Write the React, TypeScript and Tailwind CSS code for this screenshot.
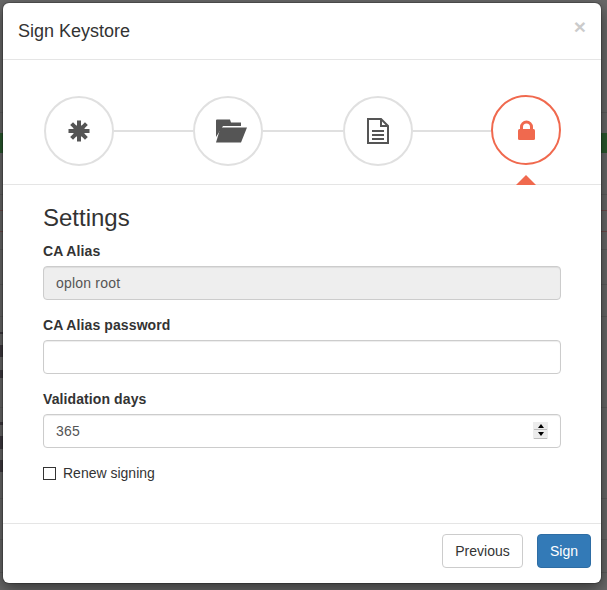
// rows of the page behind the backdrop, only their edges show beside the dialog
const filas = [
  { h: 'h-[112px]', cn: '' },
  { h: 'h-px', cn: 'bg-[#5e5e5e]' },
  { h: 'h-[20px]', cn: '' },
  { h: 'h-[20px]', cn: 'bg-[#2b5a2e]' },
  { h: 'h-[41px]', cn: '' },
  { h: 'h-px', cn: 'bg-[#5e5e5e]' },
  { h: 'h-[15px]', cn: '' },
  { h: 'h-px', cn: 'bg-[#6e4a4a]' },
  { h: 'h-[20px]', cn: '' },
  { h: 'h-px', cn: 'bg-[#6e4a4a]' },
  { h: 'h-[17px]', cn: '' },
  { h: 'h-px', cn: 'bg-[#5e5e5e]' },
  { h: 'h-[34px]', cn: '' },
  { h: 'h-px', cn: 'bg-[#5e5e5e]' },
  { h: 'h-[31px]', cn: '' },
  { h: 'h-px', cn: 'bg-[#5e5e5e]' },
  { h: 'h-[15px]', cn: '' },
  { h: 'h-[2px]', cn: '', marca: true },
  { h: 'h-[11px]', cn: '' },
  { h: 'h-[12px]', cn: '', marca: true },
  { h: 'h-[13px]', cn: '' },
  { h: 'h-[8px]', cn: '', marca: true },
  { h: 'h-[29px]', cn: '' },
  { h: 'h-px', cn: 'bg-[#5e5e5e]' },
  { h: 'h-[14px]', cn: '' },
  { h: 'h-[3px]', cn: '', marca: true },
  { h: 'h-[11px]', cn: '' },
  { h: 'h-[13px]', cn: '', marca: true },
  { h: 'h-[11px]', cn: '' },
  { h: 'h-[12px]', cn: '', marca: true },
  { h: 'h-[26px]', cn: '' },
  { h: 'h-px', cn: 'bg-[#5e5e5e]' },
  { h: 'h-[40px]', cn: '' },
  { h: 'h-px', cn: 'bg-[#5e5e5e]' },
  { h: 'h-[32px]', cn: '' },
  { h: 'h-px', cn: 'bg-[#5e5e5e]' },
];

function Asterisco() {
  return (
    <svg viewBox="0 0 22 22" className="h-[22px] w-[22px]" fill="none" stroke="#555555">
      <circle cx="11" cy="11" r="6" fill="#555555" stroke="none" />
      <path strokeWidth="4" d="M11 0.5V21.5M0.5 11H21.5M3.6 3.6L18.4 18.4M18.4 3.6L3.6 18.4" />
    </svg>
  );
}

function Carpeta() {
  return (
    <svg viewBox="0 0 32 24" className="ml-[5px] h-[24px] w-[32px]" fill="#555555">
      <path d="M1 1.5Q1 .5 2 .5H15L16 3.5H26V7H8L1 18Z" />
      <path d="M5.5 8.5H32L26 23.5H1Z" />
    </svg>
  );
}

function Archivo() {
  return (
    <svg viewBox="0 0 22 26" className="h-[26px] w-[22px]" fill="none" stroke="#555555" strokeWidth="2">
      <path d="M1 1H14L21 8V25H1Z" />
      <path d="M14 1V8H21" />
      <path d="M5 13H17M5 17H17M5 21H17" />
    </svg>
  );
}

function Candado() {
  return (
    <svg viewBox="0 0 17 20" className="h-[20px] w-[17px]">
      <path d="M3.5 10V7A5 5 0 0 1 13.5 7V10" fill="none" stroke="#f0694e" strokeWidth="3" />
      <rect x="0" y="9" width="17" height="11" rx="1.5" fill="#f0694e" />
    </svg>
  );
}

function Paso({ activo, children }: { activo?: boolean; children: React.ReactNode }) {
  return (
    <div
      className={
        activo
          ? 'relative flex h-[70px] w-[70px] shrink-0 -translate-y-px items-center justify-center rounded-full border-2 border-[#f0694e]'
          : 'flex h-[70px] w-[70px] shrink-0 items-center justify-center rounded-full border-2 border-[#e0e0e0]'
      }
    >
      {children}
      {activo && (
        <span className="absolute left-1/2 top-[78px] -ml-[10px] border-x-[10px] border-b-[10px] border-x-transparent border-b-[#f0694e]" />
      )}
    </div>
  );
}

function Linea({ w }: { w: string }) {
  return <div className={`${w} h-[2px] bg-[#e0e0e0]`} />;
}

function Campo({ label, children }: { label: string; children: React.ReactNode }) {
  return (
    <div className="mb-[15px]">
      <label className="mb-[5px] block text-[14px] font-bold leading-[20px] tracking-[0.1px]">{label}</label>
      {children}
    </div>
  );
}

const inputCn =
  'block h-[34px] w-full rounded-[4px] border border-[#cccccc] px-3 text-[14px] tracking-[0.2px] text-[#555555] shadow-[inset_0_1px_1px_rgba(0,0,0,0.075)] outline-none';

export default function App() {
  return (
    <div className="relative h-[590px] w-[607px] overflow-hidden bg-[#696969] font-['Liberation_Sans',Arial,sans-serif] text-[#333333]">
      <div className="flex flex-col">
        {filas.map((f, i) => (
          <div key={i} className={`${f.h} ${f.cn}`}>
            {f.marca && <div className="h-full w-[3px] bg-[#3f3a40]" />}
          </div>
        ))}
      </div>

      <div className="absolute left-[3px] top-[3px] flex h-[580px] w-[598px] flex-col rounded-[6px] bg-white shadow-[0_0_0_1px_rgba(0,0,0,0.2),0_5px_15px_rgba(0,0,0,0.5)]">
        <div className="flex h-[57px] shrink-0 items-start justify-between border-b border-[#e5e5e5] p-[15px]">
          <h4 className="text-[18px] leading-[26px]">Sign Keystore</h4>
          <button className="-mt-[2px] text-[21px] font-bold leading-none text-black opacity-20">×</button>
        </div>

        <div className="flex h-[125px] shrink-0 items-start border-b border-[#e5e5e5] pl-[41px] pt-[36px]">
          <div className="flex items-center">
            <Paso><Asterisco /></Paso>
            <Linea w="w-[79px]" />
            <Paso><Carpeta /></Paso>
            <Linea w="w-[80px]" />
            <Paso><Archivo /></Paso>
            <Linea w="w-[78px]" />
            <Paso activo><Candado /></Paso>
          </div>
        </div>

        <div className="flex-1 px-[40px] pt-[20px]">
          <h3 className="mb-[10px] text-[24px] leading-[26px]">Settings</h3>
          <Campo label="CA Alias">
            <input disabled value="oplon root" readOnly className={`${inputCn} bg-[#eeeeee]`} />
          </Campo>
          <Campo label="CA Alias password">
            <input type="password" className={inputCn} />
          </Campo>
          <Campo label="Validation days">
            <div className="relative">
              <input
                type="number"
                defaultValue={365}
                className={`${inputCn} [appearance:textfield] [&::-webkit-inner-spin-button]:appearance-none`}
              />
              <div className="absolute right-[13px] top-[8px] flex h-[17px] w-[15px] flex-col bg-[#ececec] px-[1px]">
                <span className="flex h-[8px] items-center justify-center border-b border-[#bdbdbd]">
                  <span className="border-x-[3.5px] border-b-[4px] border-x-transparent border-b-black" />
                </span>
                <span className="flex h-[9px] items-center justify-center border-b border-[#bdbdbd]">
                  <span className="border-x-[3.5px] border-t-[4px] border-x-transparent border-t-black" />
                </span>
              </div>
            </div>
          </Campo>
          <label className="flex items-center gap-[7px] text-[14px] leading-[20px]">
            <input type="checkbox" className="m-0 h-[13px] w-[13px] appearance-none border border-[#333333] bg-white" />
            Renew signing
          </label>
        </div>

        <div className="flex h-[60px] shrink-0 items-start justify-end gap-[14px] border-t border-[#e5e5e5] pr-[10px] pt-[10px]">
          <button className="h-[34px] w-[81px] rounded-[4px] border border-[#cccccc] bg-white text-[14px]">Previous</button>
          <button className="h-[34px] rounded-[4px] border border-[#2e6da4] bg-[#337ab7] px-3 text-[14px] text-white">Sign</button>
        </div>
      </div>
    </div>
  );
}
